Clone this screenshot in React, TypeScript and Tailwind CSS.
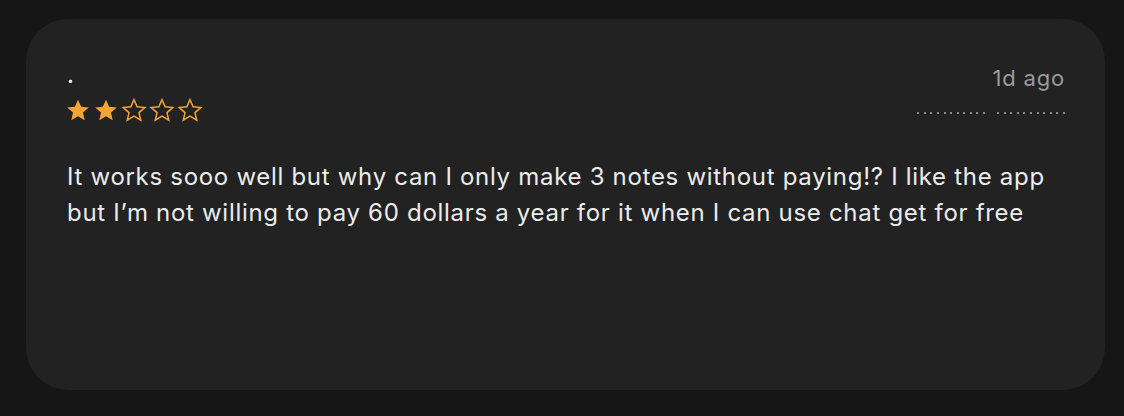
import type { FC } from 'react';

const STAR_PATH =
  'M12 2.5l2.9 6.6 7.1.6-5.4 4.7 1.6 7-6.2-3.7-6.2 3.7 1.6-7L2 9.7l7.1-.6z';

const Star: FC<{ filled: boolean }> = ({ filled }) => (
  <svg width="26" height="26" viewBox="0 0 24 24" className="shrink-0">
    <path
      d={STAR_PATH}
      fill={filled ? '#f5a433' : 'none'}
      stroke="#f5a433"
      strokeWidth={filled ? 0 : 1.4}
      strokeLinejoin="miter"
    />
  </svg>
);

const DotGroup: FC = () => (
  <div className="flex items-center gap-[4.6px]">
    {Array.from({ length: 11 }).map((_, i) => (
      <span key={i} className="block h-[2px] w-[2px] rounded-full bg-[#b0b0b0]" />
    ))}
  </div>
);

const App: FC = () => {
  const rating = 2;

  return (
    <div className="min-h-[416px] w-full bg-[#161616] pb-[26px] pl-[26px] pr-[19px] pt-[19px] font-['Inter','Noto_Sans',sans-serif]">
      <div className="h-[371px] rounded-[42px] bg-[#222222] pl-[41px] pr-[40px] pt-[44px]">
        <div className="flex items-start justify-between">
          <div>
            <p className="h-[24px] text-[24px] leading-[24px] text-white">.</p>
            <div className="-ml-[2px] mt-[10px] flex gap-[2px]">
              {[0, 1, 2, 3, 4].map((i) => (
                <Star key={i} filled={i < rating} />
              ))}
            </div>
          </div>
          <div className="mt-[2px] flex flex-col items-end">
            <p className="text-[22px] leading-[26px] tracking-[0.8px] text-[#9b9b9b]">1d ago</p>
            <div className="mt-[21px] flex gap-[12px]">
              <DotGroup />
              <DotGroup />
            </div>
          </div>
        </div>
        <p className="mt-[36px] whitespace-nowrap text-[24px] leading-[36px] tracking-[0.7px] text-[#ececec]">
          It works sooo well but why can I only make 3 notes without paying!? I like the app
          <br />
          but I’m not willing to pay 60 dollars a year for it when I can use chat get for free
        </p>
      </div>
    </div>
  );
};

export default App;
